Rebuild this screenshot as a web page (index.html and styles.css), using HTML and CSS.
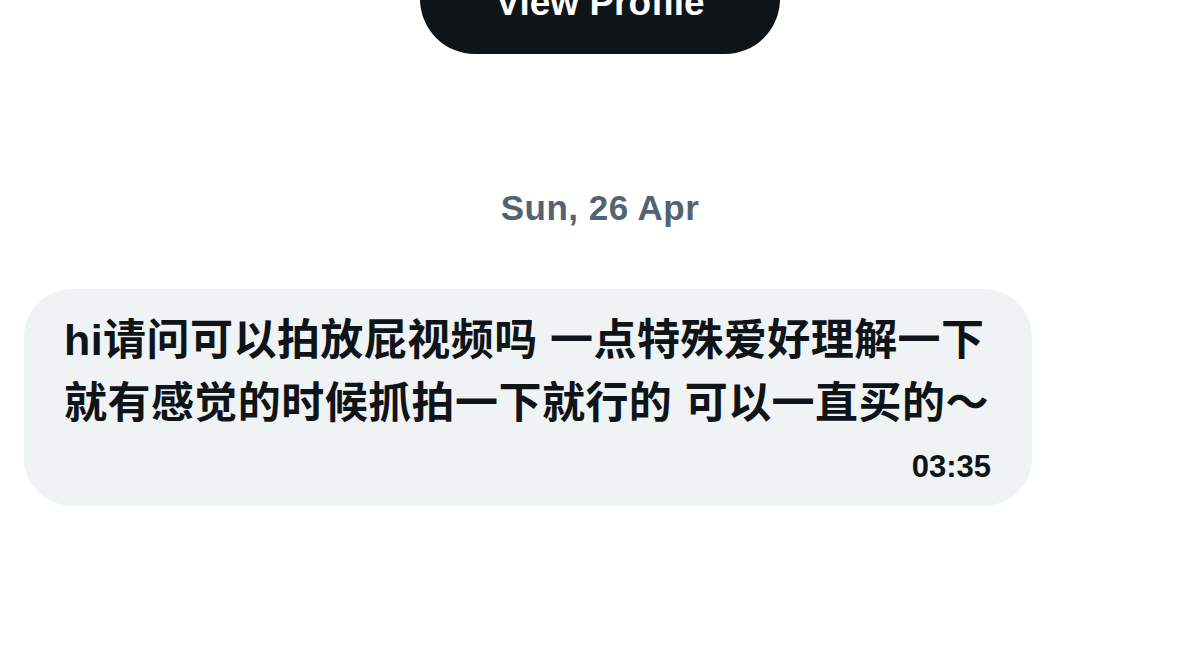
FILE: index.html
```html
<!DOCTYPE html>
<html lang="zh-CN">
<head>
  <meta charset="UTF-8">
  <meta name="viewport" content="width=device-width, initial-scale=1.0">
  <title>Messages</title>
  <link rel="stylesheet" href="styles.css">
</head>
<body>
  <div class="thread">
    <div class="profile">
      <button class="profile-btn">View Profile</button>
    </div>

    <div class="day">Sun, 26 Apr</div>

    <div class="bubble">
      <p class="msg">hi请问可以拍放屁视频吗 一点特殊爱好理解一下<br>就有感觉的时候抓拍一下就行的 可以一直买的～</p>
      <div class="time">03:35</div>
    </div>
  </div>
</body>
</html>
```

FILE: styles.css
```css
body {
  margin: 0;
  background-color: #fff;
  color: #0f1419;
  font-family: "Liberation Sans", "Noto Sans CJK SC", sans-serif;
  overflow: hidden;
}
.thread {
  display: flex;
  flex-direction: column;
  align-items: center;
}
.profile {
  margin-top: -56px;
}
.profile-btn {
  width: 360px;
  height: 110px;
  border: none;
  border-radius: 55px;
  background-color: #0f1419;
  color: #fff;
  font-family: "Liberation Sans", sans-serif;
  font-weight: bold;
  font-size: 37px;
  padding: 8px 0 0;
}
.day {
  margin-top: 134px;
  height: 40px;
  line-height: 40px;
  font-size: 35px;
  font-weight: bold;
  color: #536471;
  letter-spacing: 0.5px;
}
.bubble {
  align-self: flex-start;
  margin: 61px 0 0 24px;
  width: 1008px;
  box-sizing: border-box;
  padding: 20px 41px 21px 40px;
  background-color: #eff3f4;
  border-radius: 48px;
}
.msg {
  margin: 0;
  font-family: "Liberation Sans", "Noto Sans CJK SC", sans-serif;
  font-size: 43px;
  line-height: 63px;
  font-weight: bold;
  white-space: nowrap;
  letter-spacing: 0.45px;
}
.time {
  text-align: right;
  font-size: 31px;
  line-height: 36px;
  font-weight: bold;
  margin-top: 14px;
}
```
